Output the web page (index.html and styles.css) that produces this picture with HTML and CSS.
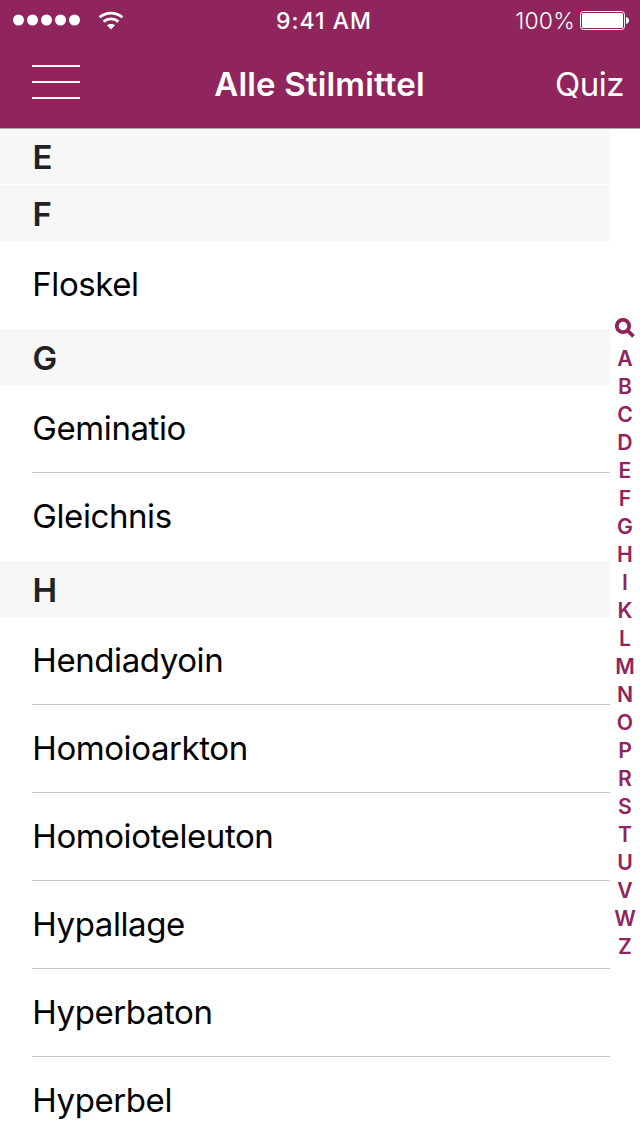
FILE: index.html
```html
<!DOCTYPE html>
<html lang="de">
<head>
<meta charset="utf-8">
<title>Alle Stilmittel</title>
<link rel="stylesheet" href="styles.css">
</head>
<body>
<div class="app">
  <header class="top">
    <div class="status">
      <div class="signal">
        <svg class="dots" viewBox="0 0 68 12"><circle cx="5.5" cy="6" r="5.5"/><circle cx="19.5" cy="6" r="5.5"/><circle cx="33.5" cy="6" r="5.5"/><circle cx="47.5" cy="6" r="5.5"/><circle cx="61.5" cy="6" r="5.5"/></svg>
        <svg class="wifi" viewBox="0 0 26 19"><path class="arc" d="M1.6 6.3C8.1.6 17.9.6 24.4 6.3M5.6 10.6c4.4-3.6 10.4-3.6 14.8 0"/><path d="M8.9 14.3c2.4-1.9 5.8-1.9 8.2 0L13 18.5z"/></svg>
      </div>
      <div class="time">9:41 AM</div>
      <div class="power">
        <span>100%</span>
        <svg class="battery" viewBox="0 0 50 19"><rect class="shell" x=".5" y=".5" width="44" height="18" rx="3"/><rect x="2" y="2" width="41" height="15" rx="1.5"/><path d="M46 6c4 .5 4 6.500 0 7z"/></svg>
      </div>
    </div>
    <nav class="nav">
      <button class="menu" aria-label="Menü"><i></i><i></i><i></i></button>
      <h1 class="title">Alle Stilmittel</h1>
      <a class="quiz">Quiz</a>
    </nav>
  </header>
  <main class="content">
    <div class="list">
      <h2 class="section pinned">E</h2>
      <h2 class="section">F</h2>
      <ul class="rows"><li>Floskel</li></ul>
      <h2 class="section">G</h2>
      <ul class="rows"><li>Geminatio</li><li>Gleichnis</li></ul>
      <h2 class="section">H</h2>
      <ul class="rows"><li>Hendiadyoin</li><li>Homoioarkton</li><li>Homoioteleuton</li><li>Hypallage</li><li>Hyperbaton</li><li>Hyperbel</li></ul>
    </div>
    <aside class="index">
      <svg class="search" viewBox="0 0 20 20"><circle cx="8" cy="8" r="6.200"/><path d="M12.500 12.500l6 5.800"/></svg>
      <span>A</span><span>B</span><span>C</span><span>D</span><span>E</span><span>F</span><span>G</span><span>H</span><span>I</span><span>K</span><span>L</span><span>M</span><span>N</span><span>O</span><span>P</span><span>R</span><span>S</span><span>T</span><span>U</span><span>V</span><span>W</span><span>Z</span>
    </aside>
  </main>
</div>
</body>
</html>
```
FILE: styles.css
```css
* { box-sizing: border-box; }
body { margin: 0; background: #fff; font-family: Inter, "Liberation Sans", sans-serif; }
.app { width: 640px; height: 1136px; overflow: hidden; display: flex; flex-direction: column; }
.top { flex: none; height: 129px; background: #90255d; border-bottom: 1px solid #a9a9a9; color: #fff; }
.status { height: 40px; display: grid; grid-template-columns: 1fr auto 1fr; align-items: center; padding: 0 10px 0 13px; font-size: 23px; }
.signal { display: flex; align-items: center; gap: 17px; }
.signal svg, .battery { fill: #fff; display: block; }
.dots { width: 68px; height: 12px; }
.wifi { width: 26px; height: 19px; }
.arc { fill: none; stroke: #fff; stroke-width: 2.8; }
.time { font-weight: 500; letter-spacing: 1px; padding: 2px 0 0 5px; }
.power { display: flex; justify-content: flex-end; align-items: center; gap: 5px; }
.power span { font-size: 23px; font-weight: 350; letter-spacing: .2px; padding-top: 2px; }
.battery { width: 50px; height: 19px; }
.shell { fill: none; stroke: #fff; }
.nav { height: 88px; display: grid; grid-template-columns: 1fr auto 1fr; align-items: center; padding: 0 17px; }
.menu { width: 48px; height: 34px; margin: -4px 0 0 15px; padding: 0; border: 0; background: none; display: flex; flex-direction: column; justify-content: space-between; }
.menu i { width: 48px; height: 2px; background: #fff; }
.title { margin: 0 1px 0 0; font-size: 33px; line-height: 40px; font-weight: 600; letter-spacing: .17px; }
.quiz { justify-self: end; font-size: 33px; line-height: 40px; letter-spacing: -.5px; margin-right: -1px; }
.content { flex: 1; min-height: 0; display: flex; }
.list { width: 610px; }
.section { margin: 0; height: 56px; padding-left: 32.5px; background: #f7f7f7; color: #222; font-size: 33px; line-height: 58px; font-weight: 600; }
.pinned { height: 55px; line-height: 56px; margin-bottom: 1px; }
.rows { list-style: none; margin: 0; padding: 0 0 0 32px; }
.rows li { height: 88px; line-height: 87px; font-size: 33px; letter-spacing: -.42px; text-indent: .3px; color: #000; border-bottom: 1px solid #c8c7cc; }
.rows li:last-child { border-bottom-color: transparent; }
.index { width: 30px; padding-top: 189px; display: flex; flex-direction: column; align-items: center; color: #90255d; font-size: 21.2px; line-height: 28px; font-weight: 600; }
.search { width: 20px; height: 20px; margin-bottom: 6px; fill: none; stroke: #90255d; stroke-width: 3.8; }
```
